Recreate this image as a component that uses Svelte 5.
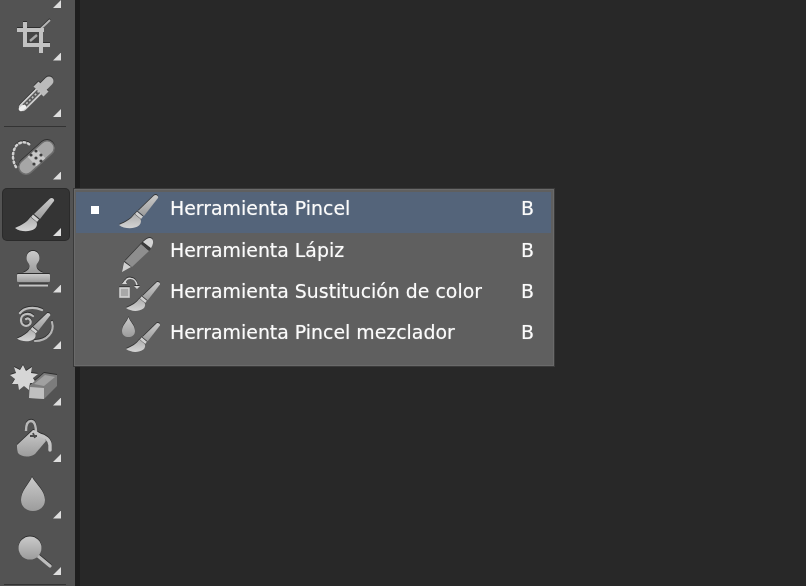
<script>
	const items = [
		{ label: "Herramienta Pincel", key: "B", active: true },
		{ label: "Herramienta Lápiz", key: "B" },
		{ label: "Herramienta Sustitución de color", key: "B" },
		{ label: "Herramienta Pincel mezclador", key: "B" }
	];
</script>

{#snippet brush(x, y, s)}
	<g transform="translate({x} {y}) scale({s})">
		<path d="M35 .5 C37 -1 40 1 39 3 L25 21 L19 16 Z" fill="url(#metal)" />
		<path d="M18 16.500 L24 21.500 L22 24 L16 19 Z" fill="#d0d0d0" />
		<path d="M15.500 19 C12 24 7 27 0 30 C5 34 15 34.500 20 30.500 C22 28.500 22.500 26 21.500 24 Z" fill="url(#soft)" />
	</g>
{/snippet}

<div class="app">
	<aside class="toolbar">
		<div class="tool cut"></div>

		<div class="tool">
			<svg viewBox="0 0 66 52">
				<defs>
					<linearGradient id="metal" x1="0" y1="0" x2="0" y2="1">
						<stop offset="0" stop-color="#cacaca" />
						<stop offset="1" stop-color="#9c9c9c" />
					</linearGradient>
					<linearGradient id="soft" x1="0" y1="0" x2="0" y2="1">
						<stop offset="0" stop-color="#aeaeae" />
						<stop offset="1" stop-color="#d4d4d4" />
					</linearGradient>
				</defs>
				<path d="M24 29 L47 7" stroke="#b5b5b5" stroke-width="1.800" />
				<path d="M24 19 H36 V30 H24 Z" fill="#454545" />
				<path d="M27 28 L34 22" stroke="#a8a8a8" stroke-width="2.400" />
				<path d="M14 17 H41 M22 9 V34 M21 32 H47 M38 17 V40" stroke="#c2c2c2" stroke-width="4" fill="none" />
			</svg>
		</div>

		<div class="tool">
			<svg viewBox="0 0 66 52">
				<path d="M37 20 L20 37" stroke="#cfcfcf" stroke-width="8" stroke-linecap="round" />
				<path d="M36 21 L21 36" stroke="#5a5a5a" stroke-width="4.500" />
				<path d="M36 21 L21 36" stroke="#c0c0c0" stroke-width="1.600" stroke-dasharray="2 2" />
				<path d="M18 39 L21 37" stroke="#eee" stroke-width="4.500" stroke-linecap="round" />
				<path d="M33 14 L43 24" stroke="#bdbdbd" stroke-width="7" />
				<path d="M40 17 L46 11" stroke="#bbb" stroke-width="9" stroke-linecap="round" />
			</svg>
		</div>

		<div class="sep"></div>

		<div class="tool">
			<svg viewBox="0 0 66 52">
				<path d="M13 35 C9 28 9 20 13 14 C17 9 24 9 28 14" stroke="#d0d0d0" stroke-width="2.600" stroke-dasharray="1.600 2.800" stroke-linecap="round" fill="none" />
				<path d="M23 35 L44 16" stroke="#6e6e6e" stroke-width="16" stroke-linecap="round" />
				<path d="M23 35 L44 16" stroke="#a6a6a6" stroke-width="13" stroke-linecap="round" />
				<path d="M29 29.500 L38 21.500" stroke="#c8c8c8" stroke-width="13" />
				<g fill="#3f3f3f">
					<circle cx="28" cy="23" r="1.600" /><circle cx="33" cy="19" r="1.600" /><circle cx="33" cy="26" r="1.600" />
					<circle cx="38" cy="23" r="1.600" /><circle cx="31" cy="32" r="1.600" /><circle cx="38" cy="29" r="1.600" />
				</g>
			</svg>
		</div>

		<div class="tool on">
			<svg viewBox="0 0 66 52">
				{@render brush(12, 9, 1)}
			</svg>
		</div>

		<div class="tool">
			<svg viewBox="0 0 66 52">
				<path d="M23.500 13 C23.500 8.500 26.500 6 30 6 C33.500 6 36.500 8.500 36.500 13 C36.500 17 33.500 18 33.500 21 C33.500 25 37 26 40 28 H20 C23 26 26.500 25 26.500 21 C26.500 18 23.500 17 23.500 13 Z" fill="url(#metal)" />
				<rect x="14" y="29" width="33" height="8" rx="1" fill="url(#metal)" />
				<rect x="16" y="39.500" width="29" height="2" fill="#c4c4c4" />
			</svg>
		</div>

		<div class="tool">
			<svg viewBox="0 0 66 52">
				<path d="M17 11 C21 6 30 4 39 8" stroke="#bdbdbd" stroke-width="2.400" fill="none" stroke-linecap="round" />
				<path d="M30 14 C25 10 18 12 18 18 C18 23 23 26 27 22 C29 19 26 15 23 17" stroke="#bdbdbd" stroke-width="2.200" fill="none" stroke-linecap="round" />
				<path d="M49 20 C52 30 44 39 32 39" stroke="#b4b4b4" stroke-width="2.200" fill="none" stroke-linecap="round" />
				{@render brush(14, 11, 0.85)}
			</svg>
		</div>

		<div class="tool">
			<svg viewBox="0 0 66 52">
				<path d="M20 7 L23 13 L29 9 L28 15 L35 16 L30 20 L33 25 L27 25 L26 32 L21 28 L16 32 L15 26 L9 26 L12 21 L7 17 L13 15 L11 9 L17 12 Z" fill="#d6d6d6" />
				<path d="M26 28 L41 15 L54 17 L54 28 L41 41 L26 40 Z" fill="#7c7c7c" />
				<path d="M31 26 L42 17 L52 19 L41 28 Z" fill="#a0a0a0" />
				<path d="M27 29 L41 30 L41 41 L26 40 Z" fill="#c0c0c0" />
			</svg>
		</div>

		<div class="tool">
			<svg viewBox="0 0 66 52">
				<path d="M23 16 C23 8 25 6 28 6 C31 6 33 8 33 18" stroke="#b8b8b8" stroke-width="2.400" fill="none" />
				<path d="M14 30 L30 15 C34 15 42 22 43 26 L32 39 C26 43 18 42 15 38 C14 35 14 33 14 30 Z" fill="url(#metal)" />
				<path d="M30 18 L32 23 M27 21 L34 21" stroke="#4a4a4a" stroke-width="1.800" />
				<path d="M36 20 C42 21 47 25 47 30 L47 35" stroke="#c4c4c4" stroke-width="3.500" fill="none" stroke-linecap="round" />
			</svg>
		</div>

		<div class="tool">
			<svg viewBox="0 0 66 52">
				<path d="M29 6 C33 13 42 20 42 29 C42 36 36 40 30 40 C24 40 18 36 18 29 C18 20 26 13 29 6 Z" fill="url(#metal)" />
			</svg>
		</div>

		<div class="tool">
			<svg viewBox="0 0 66 52">
				<path d="M35 28 L47 38" stroke="#bcbcbc" stroke-width="3.200" stroke-linecap="round" />
				<circle cx="27" cy="20" r="11.500" fill="url(#metal)" />
			</svg>
		</div>

		<div class="sep"></div>
	</aside>

	<div class="edge"></div>
	<main class="canvas"></main>

	<div class="menu">
		{#each items as item, i}
			<div class="row" class:sel={item.active}>
				<span class="check"></span>
				<svg class="ico" viewBox="0 0 46 41">
					{#if i === 0}
						{@render brush(3, 3, 1)}
					{:else if i === 1}
						<path d="M6 38 L8 28 L15 33 Z" fill="#d0d0d0" />
						<path d="M9 27 L25 10 L33 17 L16 33 Z" fill="#8e8e8e" />
						<path d="M26 9 L34 16" stroke="#3c3c3c" stroke-width="2" />
						<path d="M27 8 C31 4 34 3 36 5 C38 7 37 11 35 14 Z" fill="#d4d4d4" />
					{:else}
						{@render brush(10, 7, 0.87)}
						{#if i === 2}
							<rect x="4" y="13" width="9" height="9" fill="#a8a8a8" stroke="#d4d4d4" stroke-width="1.600" />
							<path d="M9 8 C10 2 19 1 21 10" stroke="#d4d4d4" stroke-width="1.500" fill="none" />
							<path d="M18 11 H24 L21 14 Z M6 9 L9 5 L11 9 Z" fill="#d4d4d4" />
						{:else}
							<path d="M12.500 1 C14 6 19 9 19 15 C19 19 16 21 12.500 21 C9 21 6 19 6 15 C6 9 11 6 12.500 1 Z" fill="url(#metal)" />
						{/if}
					{/if}
				</svg>
				<span class="label">{item.label}</span>
				<span class="key">{item.key}</span>
			</div>
		{/each}
	</div>
</div>

<style>
	:global(body) {
		background: #282828;
	}

	.app {
		position: relative;
		display: flex;
		height: 586px;
		overflow: hidden;
		filter: blur(0.65px);
		font-family: "DejaVu Sans", sans-serif;
	}

	.toolbar {
		width: 75px;
		flex: none;
		display: flex;
		flex-direction: column;
		gap: 5px;
		padding: 0 0 0 3px;
		box-sizing: border-box;
		background: #535353;
	}

	.edge {
		width: 5px;
		flex: none;
		background: #1e1e1e;
	}

	.canvas {
		flex: 1;
		background: #282828;
	}

	.tool {
		position: relative;
		flex: none;
		width: 66px;
		height: 51.5px;
		box-sizing: border-box;
		border-radius: 4px;
	}

	.tool svg {
		display: block;
		width: 66px;
		height: 52px;
		filter: drop-shadow(0 -1px 0 #2e2e2e);
	}

	.tool::after {
		content: "";
		position: absolute;
		right: 8px;
		bottom: 4px;
		width: 8px;
		height: 8px;
		background: #dedede;
		clip-path: polygon(100% 0, 100% 100%, 0 100%);
	}

	.cut {
		height: 8px;
	}

	.cut::after {
		bottom: 0;
	}

	.on {
		background: #343434;
		box-shadow: 0 0 0 1px #2a2a2a;
	}

	.sep {
		flex: none;
		height: 1px;
		width: 62px;
		margin-left: 1px;
		background: #333;
	}

	.menu {
		position: absolute;
		left: 73px;
		top: 188px;
		width: 482px;
		height: 179px;
		box-sizing: border-box;
		padding: 3px 3px 0 2px;
		background: #5f5f5f;
		border: 1px solid #3a3a3a;
		box-shadow: inset 0 0 0 1px #6a6a6a;
	}

	.row {
		display: flex;
		align-items: center;
		height: 41.4px;
		padding-right: 17px;
		color: #fbfbfb;
		font-size: 18.9px;
		text-shadow: 0 0 1px rgba(255, 255, 255, 0.5);
	}

	.sel {
		background: #54647a;
	}

	.check {
		flex: none;
		width: 8px;
		height: 8px;
		margin: -5px 17px 0 15px;
	}

	.sel .check {
		background: #fff;
	}

	.ico {
		flex: none;
		width: 46px;
		height: 41px;
		margin-right: 8px;
		filter: drop-shadow(0 -1px 0 #333);
	}

	.label {
		flex: 1;
		margin-top: -9px;
	}

	.key {
		flex: none;
		margin-top: -9px;
	}
</style>
